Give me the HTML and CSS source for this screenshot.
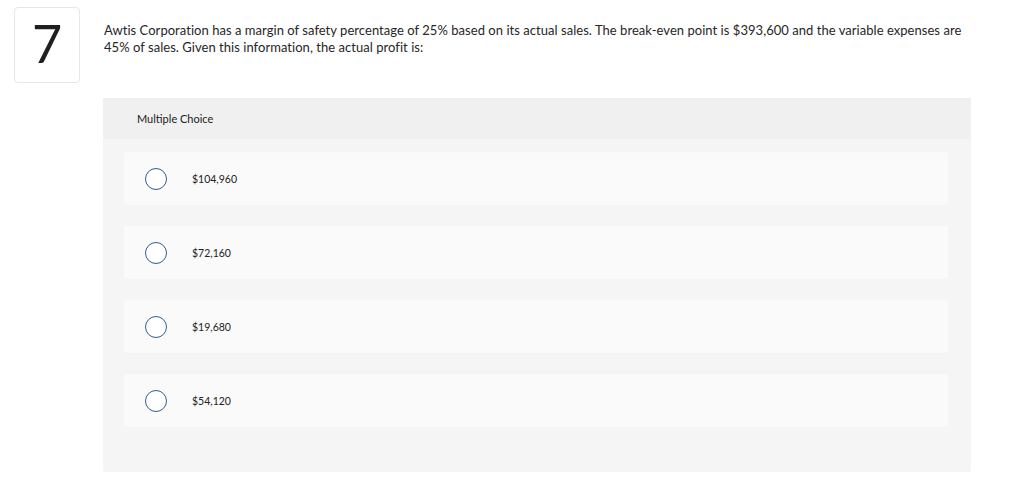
FILE: index.html
```html
<!DOCTYPE html>
<html>
<head>
<meta charset="utf-8">
<link rel="stylesheet" href="styles.css">
</head>
<body>
<div class="page">
  <div class="question">
    <div class="qnum">7</div>
    <div class="qmain">
      <p class="prompt">Awtis Corporation has a margin of safety percentage of 25% based on its actual sales. The break-even point is $393,600 and the variable expenses are 45% of sales. Given this information, the actual profit is:</p>
      <div class="panel">
        <div class="panel-head">Multiple Choice</div>
        <div class="panel-body">
          <div class="option"><span class="radio"></span><span class="label">$104,960</span></div>
          <div class="option"><span class="radio"></span><span class="label">$72,160</span></div>
          <div class="option"><span class="radio"></span><span class="label">$19,680</span></div>
          <div class="option"><span class="radio"></span><span class="label">$54,120</span></div>
        </div>
      </div>
    </div>
  </div>
</div>
</body>
</html>
```
FILE: styles.css
```css
* { box-sizing: border-box; }
html, body { margin: 0; padding: 0; background: #fff; }
body {
  font-family: Lato, "Open Sans", "Liberation Sans", sans-serif;
  color: #222;
}
.page { padding: 7px 0 0 14px; }
.question { display: flex; align-items: flex-start; }
.qnum {
  width: 66px;
  height: 76px;
  border: 1px solid #e6e6e6;
  border-radius: 4px;
  display: flex;
  align-items: center;
  justify-content: center;
  font-size: 52px;
  font-weight: 400;
  color: #1f1f1f;
  padding-bottom: 4px;
  flex: none;
}
.qmain { margin-left: 23px; width: 868px; }
.prompt {
  margin: 15px 0 0 1px;
  font-size: 13px;
  line-height: 17px;
  letter-spacing: 0.04px;
  color: #262626;
  width: 870px;
}
.panel { margin-top: 42px; background: #f5f5f5; border-radius: 2px; }
.panel-head {
  height: 41px;
  background: #f0f0f0;
  font-size: 11px;
  padding-left: 34px;
  display: flex;
  align-items: center;
  color: #222;
}
.panel-body {
  padding: 13px 23px 45px 21px;
  display: flex;
  flex-direction: column;
  gap: 21px;
}
.option {
  height: 53px;
  background: #fafafa;
  border-radius: 2px;
  display: flex;
  align-items: center;
  padding-left: 21px;
}
.radio {
  width: 22px;
  height: 22px;
  border: 1px solid #2f5d8e;
  border-radius: 50%;
  background: #fff;
  flex: none;
}
.label { margin-left: 25px; font-size: 10.5px; color: #222; }
```
